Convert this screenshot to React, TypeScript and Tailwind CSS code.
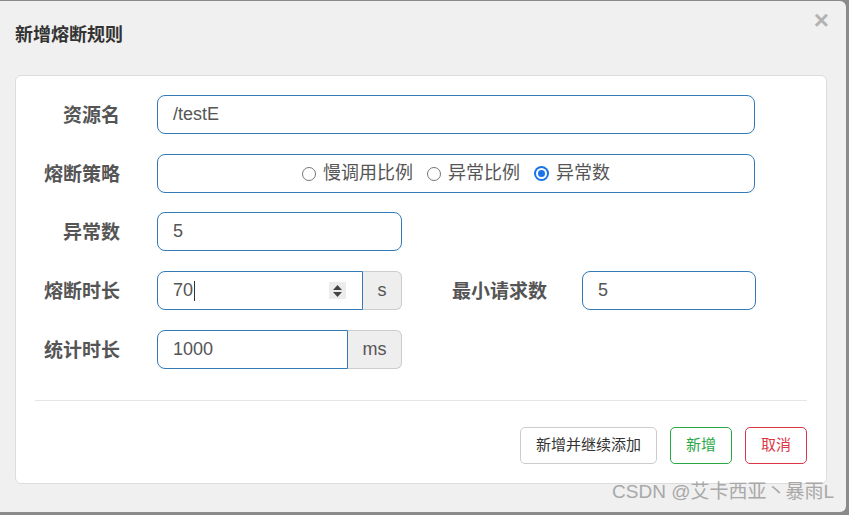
import React from 'react';

const cjk = { fontFamily: '"Liberation Sans", "Noto Sans CJK SC", sans-serif' };

const Label = ({ text, w = 'w-[85px]' }: { text: string; w?: string }) => (
  <div className={`${w} shrink-0 pt-[3px] text-right text-[19px] font-bold text-[#555]`}>{text}</div>
);

const Radio = ({ checked, label }: { checked?: boolean; label: string }) => (
  <div className="flex items-center gap-[7px]">
    {checked ? (
      <span className="flex h-[15px] w-[15px] items-center justify-center rounded-full bg-[#1a73e8]">
        <span className="h-[11px] w-[11px] rounded-full border-2 border-white bg-[#1a73e8]" />
      </span>
    ) : (
      <span className="h-[14px] w-[14px] rounded-full border border-[#767676] bg-white" />
    )}
    <span className="text-[18px] text-[#555]">{label}</span>
  </div>
);

const inputCls = 'flex h-[39px] items-center border border-[#337ab7] bg-white px-[15px] text-[18px] text-[#555]';

export default function App() {
  return (
    <div className="h-[515px] w-[849px] overflow-hidden bg-[#8a8a8a] pt-px" style={cjk}>
      <div className="relative h-[511px] w-[846px] rounded-r-[6px] bg-[#f0f0f0]">
        <div className="flex h-[74px] items-center justify-between pb-[6px] pl-[15px] pr-[17px]">
          <div className="text-[18px] font-bold text-[#333]">新增熔断规则</div>
          <div className="-mt-[30px] text-[26px] font-bold leading-none text-[#b3b3b3]">×</div>
        </div>

        <div className="ml-[15px] w-[812px] rounded-[6px] border border-[#ddd] bg-white px-[19px] pt-[19px] pb-[19px]">
          <div className="flex flex-col gap-[20px]">
            <div className="flex items-center">
              <Label text="资源名" />
              <div className={`${inputCls} ml-[37px] w-[598px] rounded-[8px]`}>/testE</div>
            </div>

            <div className="flex items-center">
              <Label text="熔断策略" />
              <div className={`${inputCls} ml-[37px] w-[598px] justify-center gap-[14px] rounded-[8px]`}>
                <Radio label="慢调用比例" />
                <Radio label="异常比例" />
                <Radio checked label="异常数" />
              </div>
            </div>

            <div className="-mt-px flex items-center">
              <Label text="异常数" />
              <div className={`${inputCls} ml-[37px] w-[245px] rounded-[8px]`}>5</div>
            </div>

            <div className="flex items-center">
              <Label text="熔断时长" />
              <div className="ml-[37px] flex w-[245px]">
                <div className={`${inputCls} w-[206px] justify-between rounded-l-[8px] pr-[16px]`}>
                  <span className="flex items-center">
                    70<span className="ml-px h-[20px] w-px bg-[#333]" />
                  </span>
                  <span className="flex h-[17px] w-[17px] flex-col items-center justify-center gap-[2px] bg-[#ececec]">
                    <svg width="9" height="5" viewBox="0 0 9 5"><path d="M4.5 0L9 5H0z" fill="#444" /></svg>
                    <svg width="9" height="5" viewBox="0 0 9 5"><path d="M0 0h9L4.5 5z" fill="#444" /></svg>
                  </span>
                </div>
                <div className="flex h-[39px] flex-1 items-center justify-center rounded-r-[6px] border border-l-0 border-[#ccc] bg-[#eee] text-[18px] text-[#555]">
                  s
                </div>
              </div>
              <Label text="最小请求数" w="w-[145px]" />
              <div className={`${inputCls} ml-[35px] w-[174px] rounded-[8px]`}>5</div>
            </div>

            <div className="flex items-center">
              <Label text="统计时长" />
              <div className="ml-[37px] flex w-[245px]">
                <div className={`${inputCls} w-[191px] rounded-l-[8px]`}>1000</div>
                <div className="flex h-[39px] flex-1 items-center justify-center rounded-r-[6px] border border-l-0 border-[#ccc] bg-[#eee] text-[18px] text-[#555]">
                  ms
                </div>
              </div>
            </div>
          </div>

          <div className="mt-[31px] h-px w-full bg-[#e5e5e5]" />

          <div className="mt-[26px] flex justify-end gap-[13px]">
            <button className="h-[37px] w-[137px] rounded-[5px] border border-[#ccc] bg-white text-[15px] text-[#333]">
              新增并继续添加
            </button>
            <button className="h-[37px] w-[62px] rounded-[5px] border border-[#28a745] bg-white text-[15px] text-[#28a745]">
              新增
            </button>
            <button className="h-[37px] w-[62px] rounded-[5px] border border-[#dc3545] bg-white text-[15px] text-[#dc3545]">
              取消
            </button>
          </div>
        </div>

        <div className="absolute right-[12px] bottom-[6px] text-[19px] text-[#a8a8a8]">CSDN @艾卡西亚丶暴雨L</div>
      </div>
    </div>
  );
}
